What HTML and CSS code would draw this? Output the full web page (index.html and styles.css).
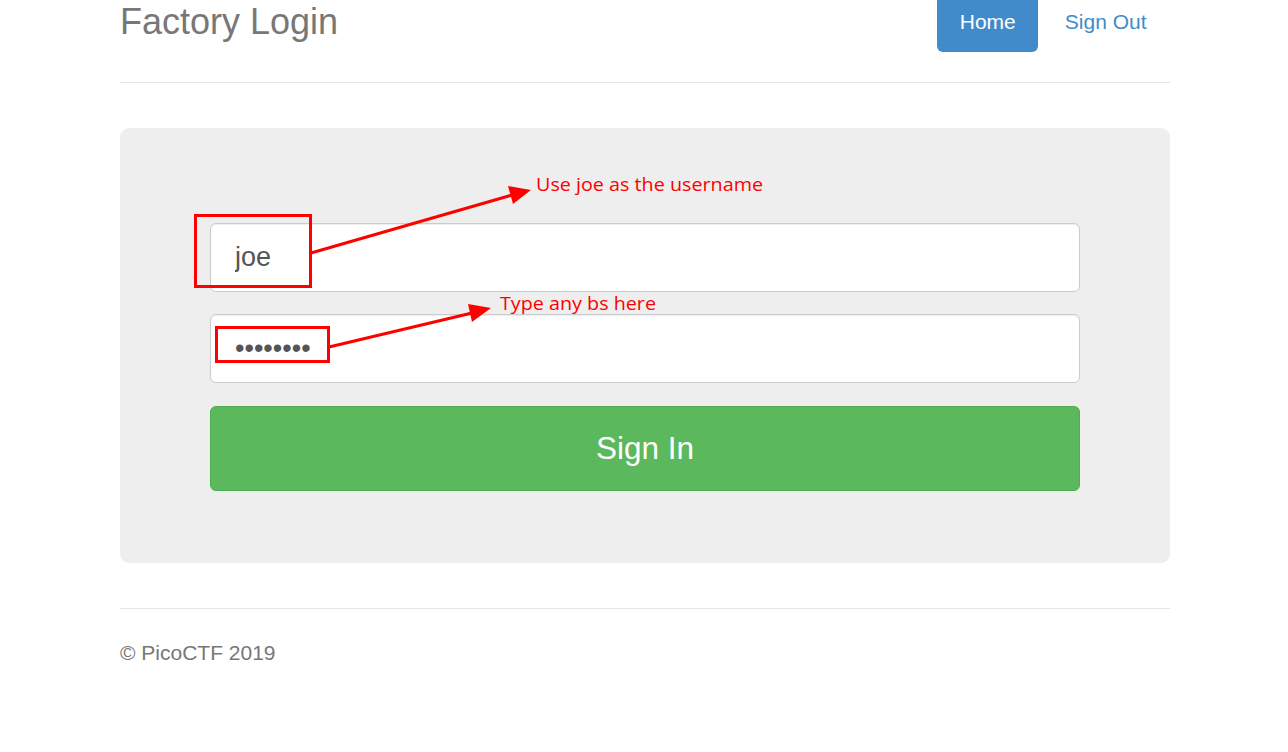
FILE: index.html
```html
<!DOCTYPE html>
<html lang="en">
<head>
<meta charset="utf-8">
<title>Factory Login</title>
<link rel="stylesheet" href="styles.css">
</head>
<body>
<div class="page">
  <div class="container">
    <header class="header">
      <h3 class="brand">Factory Login</h3>
      <nav class="nav">
        <a class="pill active" href="#">Home</a>
        <a class="pill" href="#">Sign Out</a>
      </nav>
    </header>

    <main class="jumbotron">
      <form class="signin">
        <input class="field field-user" type="text" value="joe">
        <input class="field field-pass" type="password" value="12345678">
        <button class="btn-signin" type="button">Sign In</button>
      </form>
    </main>

    <footer class="footer">
      <p>© PicoCTF 2019</p>
    </footer>
  </div>

  <svg class="annotations" width="1288" height="752" viewBox="0 0 1288 752">
    <rect x="195.5" y="215.5" width="115" height="71" fill="none" stroke="#ff0000" stroke-width="3"/>
    <line x1="311" y1="253" x2="512" y2="195" stroke="#ff0000" stroke-width="3"/>
    <polygon points="531,190 508,186 513,204" fill="#ff0000"/>
    <text class="note" x="536" y="191" textLength="227" lengthAdjust="spacingAndGlyphs">Use joe as the username</text>

    <rect x="216.5" y="327.5" width="112" height="34" fill="none" stroke="#ff0000" stroke-width="3"/>
    <line x1="329" y1="347" x2="472" y2="313" stroke="#ff0000" stroke-width="3"/>
    <polygon points="491,308 468,304 472,322" fill="#ff0000"/>
    <text class="note" x="500" y="310" textLength="156" lengthAdjust="spacingAndGlyphs">Type any bs here</text>
  </svg>
</div>
</body>
</html>
```

FILE: styles.css
```css
* { box-sizing: border-box; }

html, body {
  margin: 0;
  padding: 0;
  background: #fff;
}

body {
  font-family: "Liberation Sans", Arial, sans-serif;
  font-size: 21px;
  color: #333;
  overflow: hidden;
}

.page {
  position: relative;
  display: flow-root;
  width: 1288px;
  height: 752px;
}

.container {
  width: 1050px;
  margin-left: 120px;
}

.header {
  display: flex;
  justify-content: space-between;
  align-items: flex-start;
  margin-top: -8px;
  padding-bottom: 30px;
  border-bottom: 1px solid #e5e5e5;
}

.brand {
  margin: 0;
  font-size: 36px;
  font-weight: 500;
  line-height: 60px;
  color: #777;
}

.nav {
  display: flex;
  gap: 4px;
  margin-right: 1px;
}

.pill {
  display: block;
  height: 60px;
  padding: 15px 22.5px;
  line-height: 30px;
  font-size: 21px;
  color: #428bca;
  text-decoration: none;
  border-radius: 6px;
}

.pill.active {
  background: #428bca;
  color: #fff;
}

.jumbotron {
  margin-top: 45px;
  background: #eee;
  border-radius: 9px;
  padding: 95px 90px 72px;
}

.signin {
  display: flex;
  flex-direction: column;
}

.field {
  display: block;
  width: 100%;
  height: 69px;
  padding: 15px 24px;
  font-family: "Liberation Sans", Arial, sans-serif;
  font-size: 27px;
  color: #555;
  background: #fff;
  border: 1px solid #ccc;
  border-radius: 6px;
  box-shadow: inset 0 1px 1px rgba(0,0,0,0.075);
  outline: none;
}

.field-user { margin-bottom: 22px; }
.field-pass { margin-bottom: 23px; }

.btn-signin {
  display: block;
  width: 100%;
  height: 85px;
  font-family: "Liberation Sans", Arial, sans-serif;
  font-size: 31.5px;
  color: #fff;
  background: #5cb85c;
  border: 1px solid #4cae4c;
  border-radius: 6px;
  cursor: pointer;
}

.footer {
  margin-top: 45px;
  border-top: 1px solid #e5e5e5;
  padding-top: 29px;
}

.footer p {
  margin: 0;
  font-size: 21px;
  line-height: 30px;
  color: #777;
}

.annotations {
  position: absolute;
  left: 0;
  top: 0;
  pointer-events: none;
}

.note {
  font-family: "Open Sans", "DejaVu Sans", sans-serif;
  font-size: 19px;
  fill: #ff0000;
}
```
